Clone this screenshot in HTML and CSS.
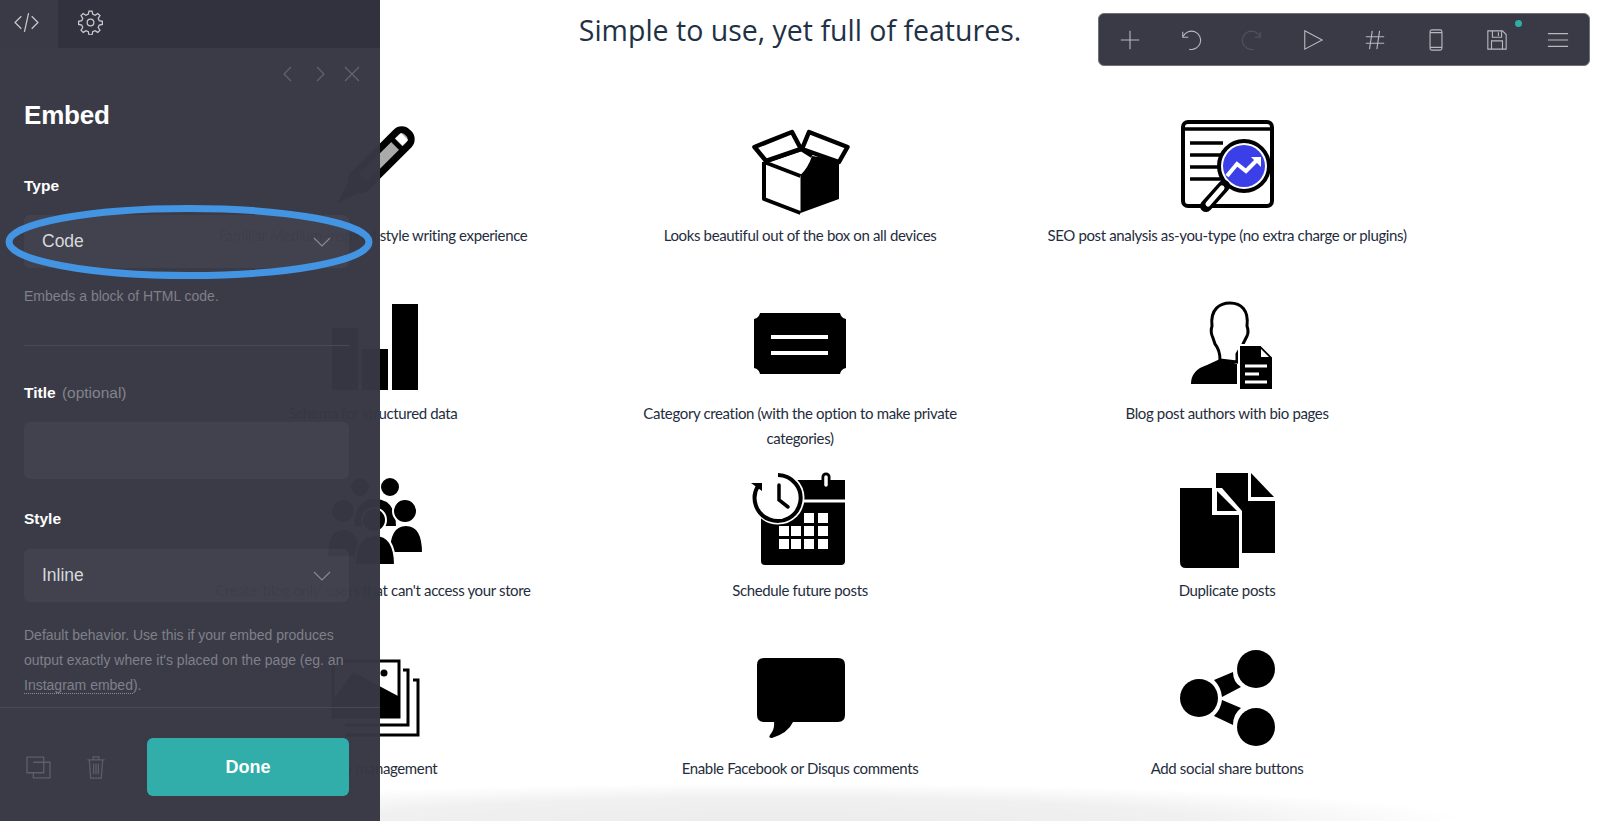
FILE: index.html
```html
<!DOCTYPE html>
<html lang="en">
<head>
<meta charset="utf-8">
<title>Embed</title>
<link rel="stylesheet" href="styles.css">
</head>
<body>
<main class="page">
  <h1 class="page-title">Simple to use, yet full of features.</h1>
  <div class="features">
    <figure class="feature">
      <svg class="pic" viewBox="0 0 100 100"><g transform="rotate(45 54 48)"><rect x="45" y="4" width="18" height="76" rx="8" fill="#aaa" stroke="#000" stroke-width="7"/><rect x="49" y="9" width="10" height="8" fill="#fff"/><path d="M45 20H63M45 70L54 96L63 70Z" fill="#222" stroke="#000" stroke-width="5"/></g></svg>
      <figcaption>Familiar Medium-inspired style writing experience</figcaption>
    </figure>
    <figure class="feature">
      <svg class="pic" viewBox="0 0 100 100"><path d="M50.500 59V97L89 83V44L62 40Q58 52 50.500 59Z"/><path d="M14 46V83L50.500 97M14 46L50.500 60M16 45L51 33L62 40" fill="none" stroke="#000" stroke-width="4" stroke-linejoin="round"/><path d="M4.500 31L42 16L51 33L16 45ZM59 16L97.500 31L89 46L52 33Z" fill="#fff" stroke="#000" stroke-width="4.500" stroke-linejoin="round"/></svg>
      <figcaption>Looks beautiful out of the box on all devices</figcaption>
    </figure>
    <figure class="feature">
      <svg class="pic" viewBox="0 0 100 100"><rect x="6" y="6" width="89" height="84" rx="5" fill="#fff" stroke="#000" stroke-width="4"/><path d="M6 13H95M13 27H46M13 39H46M13 51H46M13 63H46" stroke="#000" stroke-width="3.500" fill="none"/><circle cx="67" cy="50" r="25" fill="#fff" stroke="#000" stroke-width="4"/><circle cx="67" cy="50" r="21" fill="#3b3fe8"/><path d="M50 60L60 48L69 55L80 44" stroke="#fff" stroke-width="4" fill="none"/><path d="M74 41H84V51Z" fill="#fff"/><path d="M47 70L29 90" stroke="#000" stroke-width="12" stroke-linecap="round"/><path d="M45 72L31 88" stroke="#fff" stroke-width="5" stroke-linecap="round"/></svg>
      <figcaption>SEO post analysis as-you-type (no extra charge or plugins)</figcaption>
    </figure>
    <figure class="feature">
      <svg class="pic" viewBox="0 0 100 100"><rect x="9" y="34" width="26" height="62"/><rect x="39" y="55" width="26" height="41"/><rect x="69" y="10" width="26" height="86"/></svg>
      <figcaption>Schema for structured data</figcaption>
    </figure>
    <figure class="feature">
      <svg class="pic" viewBox="0 0 100 100"><path d="M10 19H90Q91 24 96 25V74Q91 75 90 80H10Q9 75 4 74V25Q9 24 10 19Z"/><path d="M21 43H78M21 59H78" stroke="#fff" stroke-width="4"/></svg>
      <figcaption>Category creation (with the option to make private categories)</figcaption>
    </figure>
    <figure class="feature">
      <svg class="pic" viewBox="0 0 100 100"><path d="M14 90Q14 76 30 71L43 65L60 70V90Z"/><path d="M43 66Q43 56 38 50L36 44Q33 38 35 32C33 15 43 9 53 9C64 9 72 16 70 32Q72 38 70 42L66 50L60 60V68Z" fill="#fff" stroke="#000" stroke-width="3"/><path d="M62 51H84L96 63V96H62Z" stroke="#fff" stroke-width="2"/><path d="M84 55L92 63H84Z" fill="#fff"/><path d="M68 72H90M68 80H82M68 88H90" stroke="#fff" stroke-width="3"/></svg>
      <figcaption>Blog post authors with bio pages</figcaption>
    </figure>
    <figure class="feature">
      <svg class="pic" viewBox="0 0 100 100"><g fill="#000" stroke="#fff" stroke-width="2"><circle cx="37" cy="16" r="10"/><circle cx="67" cy="16" r="10"/><path d="M30 56Q30 27 52 27Q74 27 74 56Z"/><path d="M4 86Q4 58 20 58Q37 58 38 86Z"/><path d="M66 82Q66 54 83 54Q100 54 100 82Z"/><circle cx="20" cy="40" r="12"/><circle cx="82" cy="40" r="12"/><path d="M32 94Q32 64 52 64Q72 64 72 94Z"/><circle cx="51" cy="49" r="12"/></g></svg>
      <figcaption>Create 'blog only' users that can't access your store</figcaption>
    </figure>
    <figure class="feature">
      <svg class="pic" viewBox="0 0 100 100"><path d="M11 9H95V90Q95 94 91 94H15Q11 94 11 90Z"/><path d="M76 6V14" stroke="#000" stroke-width="9" stroke-linecap="round"/><path d="M76 6V14" stroke="#fff" stroke-width="3.500" stroke-linecap="round"/><path d="M50 30H95" stroke="#fff" stroke-width="3"/><circle cx="28" cy="27" r="25" fill="#fff" stroke="#fff" stroke-width="3"/><path d="M8 15A23 23 0 1 0 28 4" fill="none" stroke="#000" stroke-width="4"/><path d="M1 12H12V20Z"/><path d="M29 14V29L38 36" fill="none" stroke="#000" stroke-width="3.500" stroke-linecap="round"/><g fill="#fff"><rect x="54" y="42" width="10" height="10"/><rect x="68" y="42" width="10" height="10"/><rect x="29" y="55" width="10" height="10"/><rect x="41" y="55" width="10" height="10"/><rect x="54" y="55" width="10" height="10"/><rect x="68" y="55" width="10" height="10"/><rect x="29" y="68" width="10" height="10"/><rect x="41" y="68" width="10" height="10"/><rect x="54" y="68" width="10" height="10"/><rect x="68" y="68" width="10" height="10"/></g></svg>
      <figcaption>Schedule future posts</figcaption>
    </figure>
    <figure class="feature">
      <svg class="pic" viewBox="0 0 100 100"><path d="M39 2H71V30H98V82H65V40L45 17H39Z"/><path d="M74 2L97 26H74Z"/><path d="M3 17H35V44H62V97H9Q3 97 3 91Z"/><path d="M40 20L60 40H40Z"/></svg>
      <figcaption>Duplicate posts</figcaption>
    </figure>
    <figure class="feature">
      <svg class="pic" viewBox="0 0 100 100"><rect x="10" y="12" width="66" height="56" fill="#fff" stroke="#000" stroke-width="3"/><path d="M11 50L30 23L75 47V67H11Z"/><circle cx="61" cy="24" r="3.500"/><path d="M80 21H85V76H22M90 31H95V86H22" fill="none" stroke="#000" stroke-width="3"/></svg>
      <figcaption>Gallery management</figcaption>
    </figure>
    <figure class="feature">
      <svg class="pic" viewBox="0 0 100 100"><path d="M14 9H88Q95 9 95 16V66Q95 73 88 73H43Q38 84 22 89Q18 89 20 86Q25 80 24 73H14Q7 73 7 66V16Q7 9 14 9Z"/></svg>
      <figcaption>Enable Facebook or Disqus comments</figcaption>
    </figure>
    <figure class="feature">
      <svg class="pic" viewBox="0 0 100 100"><circle cx="22" cy="49" r="19"/><circle cx="79" cy="20" r="19"/><circle cx="79" cy="78" r="19"/><path d="M37 31L56 23Q56 33 64 38L45 48Q44 38 37 31ZM45 51L64 59Q56 65 56 76L37 67Q44 60 45 51Z"/></svg>
      <figcaption>Add social share buttons</figcaption>
    </figure>
  </div>
</main>

<aside class="panel">
  <div class="tabs">
    <div class="tab tab-active"><svg class="tab-icon" viewBox="0 0 24 24"><path d="M7 6L1 12L7 18M17 6L23 12L17 18M14 3L10 21"/></svg></div>
    <div class="tab"><svg class="tab-icon" viewBox="0 0 24 24"><circle cx="12" cy="12" r="3.200"/><path d="M10.500 1h3l.6 3 2.300 1 2.600-1.700 2.100 2.100-1.700 2.600 1 2.300 3 .6v3l-3 .6-1 2.300 1.700 2.600-2.100 2.100-2.600-1.700-2.300 1-.6 3h-3l-.6-3-2.300-1-2.600 1.700-2.100-2.100 1.700-2.600-1-2.300-3-.6v-3l3-.6 1-2.300-1.700-2.600 2.100-2.100 2.600 1.700 2.300-1z"/></svg></div>
  </div>
  <div class="panel-nav">
    <svg class="nav-icon" viewBox="0 0 16 16"><path d="M11 1L4 8L11 15"/></svg>
    <svg class="nav-icon" viewBox="0 0 16 16"><path d="M5 1L12 8L5 15"/></svg>
    <svg class="nav-icon" viewBox="0 0 16 16"><path d="M1 1L15 15M15 1L1 15"/></svg>
  </div>
  <div class="panel-body">
    <h2 class="panel-title">Embed</h2>
    <div class="field field-type">
      <div class="label">Type</div>
      <div class="select"><span>Code</span><svg class="chev" viewBox="0 0 18 10"><path d="M1 1L9 9L17 1"/></svg></div>
      <p class="help help-type">Embeds a block of HTML code.</p>
    </div>
    <hr class="rule">
    <div class="field field-title">
      <div class="label">Title <span class="optional">(optional)</span></div>
      <div class="input"></div>
    </div>
    <div class="field field-style">
      <div class="label">Style</div>
      <div class="select"><span>Inline</span><svg class="chev" viewBox="0 0 18 10"><path d="M1 1L9 9L17 1"/></svg></div>
      <p class="help">Default behavior. Use this if your embed produces output exactly where it's placed on the page (eg. an <span class="link">Instagram embed</span>).</p>
    </div>
  </div>
  <div class="panel-foot">
    <svg class="foot-icon foot-copy" viewBox="0 0 24 22"><path d="M1 1H17V6H23V21H7V16H1ZM7 6H17V16H7"/></svg>
    <svg class="foot-icon foot-trash" viewBox="0 0 20 24"><path d="M1 4H19M7 4V1H13V4M3 4L4.500 23H15.500L17 4M7.500 8V19M10 8V19M12.500 8V19"/></svg>
    <button class="done">Done</button>
  </div>
  <svg class="ellipse" viewBox="0 0 372 76"><ellipse cx="186" cy="38" rx="180" ry="33.500"/></svg>
</aside>

<nav class="toolbar">
  <svg class="tool" viewBox="0 0 24 24"><path d="M12 2V22M2 12H22"/></svg>
  <svg class="tool" viewBox="0 0 24 24"><path d="M3 3V9H9M3.500 8A10 10 0 1 1 10 22"/></svg>
  <svg class="tool tool-off" viewBox="0 0 24 24"><path d="M21 3V9H15M20.500 8A10 10 0 1 0 14 22"/></svg>
  <svg class="tool" viewBox="0 0 24 24"><path d="M3 2L22 12L3 22Z"/></svg>
  <svg class="tool" viewBox="0 0 24 24"><path d="M9 2L6 22M17 2L14 22M2 8.500H22M2 15.500H22"/></svg>
  <svg class="tool" viewBox="0 0 24 24"><rect x="5.500" y="1" width="13" height="22" rx="2"/><path d="M5.500 4H18.500M5.500 20H18.500"/></svg>
  <span class="tool-wrap">
    <svg class="tool" viewBox="0 0 24 24"><path d="M2 2H18L22 6V22H2ZM7 2V9H17V2M13.500 3.500V7.500M6 22V13H18V22"/></svg>
    <i class="dot"></i>
  </span>
  <svg class="tool" viewBox="0 0 24 24"><path d="M1 5H23M1 12H23M1 19H23"/></svg>
</nav>
</body>
</html>
```
FILE: styles.css
```css
* { box-sizing: border-box; }
html, body { margin: 0; height: 100%; overflow: hidden; background: #fff; }
body { position: relative; font-family: "Liberation Sans", Arial, sans-serif; }

.page { position: relative; height: 821px; overflow: hidden; }
.page::after {
  content: ""; position: absolute; left: 0; right: 0; bottom: 0; height: 38px;
  background: radial-gradient(ellipse 690px 38px at 780px 100%, rgba(0,0,0,.075) 0, rgba(0,0,0,.06) 60%, rgba(0,0,0,0) 100%);
}
.page-title {
  margin: 0; height: 116px; padding-top: 12px; text-align: center;
  font: 400 28.500px/36px "Open Sans", sans-serif; color: #1f3244;
}
.features {
  display: grid; grid-template-columns: repeat(3, 427px); grid-auto-rows: 177.670px;
  justify-content: center;
}
.feature { margin: 0; display: flex; flex-direction: column; align-items: center; }
.pic { width: 100px; height: 100px; flex: none; display: block; margin-bottom: 7px; }
.feature figcaption {
  width: 340px; text-align: center; letter-spacing: -.36px;
  font: 400 15px/25px Lato, sans-serif; color: #1f2d3d;
}
.feature:nth-child(3) figcaption { width: 427px; }

.panel {
  position: absolute; left: 0; top: 0; width: 380px; height: 821px;
  display: flex; flex-direction: column;
  background: rgba(54, 55, 67, .98);
}
.tabs { height: 48px; display: flex; background: rgba(0,0,0,.14); flex: none; }
.tab { width: 64px; padding-bottom: 4px; display: flex; align-items: center; justify-content: center; }
.tab-active { width: 58px; padding-left: 14px; justify-content: flex-start; background: #393a46; }
.tab-icon { width: 25px; height: 25px; fill: none; stroke: #c9cad0; stroke-width: 1.200; }

.panel-nav { display: flex; justify-content: flex-end; gap: 16px; padding: 18px 20px 0 0; height: 50px; flex: none; }
.nav-icon { width: 16px; height: 16px; fill: none; stroke: #63646e; stroke-width: 1.200; }

.panel-body { flex: 1; padding: 0 31px 0 24px; color: #fff; }
.panel-title { margin: 0; font-size: 26px; line-height: 34px; font-weight: 700; letter-spacing: -.2px; }
.field-type { margin-top: 44px; }
.label { font-size: 15.500px; line-height: 20px; font-weight: 700; }
.optional { font-weight: 400; color: #83848c; margin-left: 2px; }
.select {
  height: 53px; margin-top: 19px; padding: 0 18px; border-radius: 6px;
  display: flex; align-items: center; justify-content: space-between;
  background: rgba(255,255,255,.04); color: #d7d8dc; font-size: 17.500px;
}
.chev { width: 18px; height: 10px; fill: none; stroke: #8a8b93; stroke-width: 1.100; }
.help { margin: 0; font-size: 14px; line-height: 25px; color: #7f8089; padding-top: 21px; }
.help-type { padding-top: 16px; }
.rule { margin: 36px 0 0; border: 0; border-top: 1px solid #484954; }
.field-title { margin-top: 37px; }
.field-title .input { height: 57px; margin-top: 19px; border-radius: 6px; background: rgba(255,255,255,.04); }
.field-style { margin-top: 30px; }
.field-style .select { margin-top: 20px; }
.link { border-bottom: 1px dotted #8a8b93; }

.panel-foot {
  height: 114px; flex: none; border-top: 1px solid #484954;
  display: flex; align-items: flex-start; padding: 30px 31px 0 26px;
}
.foot-icon { fill: none; stroke: #5d5e68; stroke-width: 1.300; height: 23px; margin-top: 18px; }
.foot-copy { width: 25px; }
.foot-trash { width: 20px; margin-left: 35px; }
.done {
  margin-left: auto; width: 202px; height: 58px; border: 0; border-radius: 6px;
  background: #31aeaa; color: #fff; font: 700 18px "Liberation Sans", sans-serif;
}
.ellipse {
  position: absolute; left: 3px; top: 204px; width: 372px; height: 76px;
  fill: none; stroke: #4394e2; stroke-width: 7;
}

.toolbar {
  position: absolute; left: 1098px; top: 13px; width: 492px; height: 53px;
  display: grid; grid-template-columns: repeat(8, 1fr); align-items: center; justify-items: center;
  background: #393a46; border: 1px solid #6f707a; border-radius: 6px;
}
.tool { width: 22px; height: 22px; display: block; fill: none; stroke: #b8b9bf; stroke-width: 1.200; }
.tool-off { stroke: #52535d; }
.tool-wrap { position: relative; display: block; }
.dot { position: absolute; left: 29px; top: -9px; width: 7px; height: 7px; border-radius: 50%; background: #2bb0a4; }
```
